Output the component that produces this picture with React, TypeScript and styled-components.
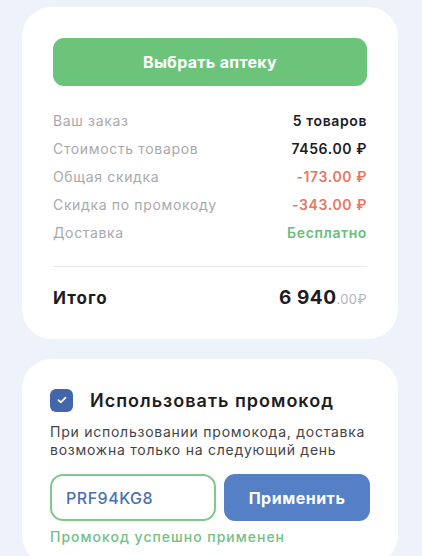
import { FC } from "react";
import styled, { createGlobalStyle } from "styled-components";

const GlobalStyle = createGlobalStyle`
  html, body {
    margin: 0;
    padding: 0;
    background: #eef2fb;
  }
  body {
    font-family: Inter, "Noto Sans", "Liberation Sans", sans-serif;
    -webkit-font-smoothing: antialiased;
  }
`;

const StyledPage = styled.div`
  display: flex;
  flex-direction: column;
  gap: 20px;
  padding: 7px 24px 0 22px;
  height: 556px;
  box-sizing: border-box;
  overflow: hidden;
`;

const StyledCard = styled.div<{ pad: string }>`
  background: #ffffff;
  border-radius: 30px;
  padding: ${(props) => props.pad};
  display: flex;
  flex-direction: column;
`;

const StyledMainButton = styled.button`
  height: 48px;
  border: none;
  border-radius: 11px;
  background: #6cc47b;
  color: #ffffff;
  font-family: inherit;
  font-size: 16px;
  font-weight: 700;
  letter-spacing: 0.3px;
  cursor: pointer;
`;

const StyledRows = styled.div`
  margin-top: 20px;
  display: flex;
  flex-direction: column;
`;

const StyledRow = styled.div`
  display: flex;
  justify-content: space-between;
  align-items: center;
  height: 28px;
  font-size: 14px;
  letter-spacing: 0.65px;
`;

const StyledLabel = styled.span`
  color: #a9a9ab;
`;

const StyledValue = styled.span<{ tone: "dark" | "red" | "green" }>`
  font-weight: 600;
  letter-spacing: 0.6px;
  color: ${(props) =>
    props.tone === "red" ? "#e8775f" : props.tone === "green" ? "#6cbd7e" : "#1d1d1f"};
`;

const StyledDivider = styled.div`
  margin-top: 20px;
  height: 1px;
  background: #e7e8ec;
`;

const StyledTotalRow = styled.div`
  display: flex;
  justify-content: space-between;
  align-items: baseline;
  padding: 19px 0 30px;
  color: #1d1d1f;
`;

const StyledTotalLabel = styled.span`
  font-size: 17px;
  font-weight: 700;
  letter-spacing: 1px;
`;

const StyledTotalValue = styled.span`
  font-size: 19px;
  font-weight: 700;
  letter-spacing: 0.5px;
`;

const StyledCents = styled.span`
  font-size: 13px;
  font-weight: 400;
  color: #b3b3b6;
  letter-spacing: 0.4px;
`;

const StyledCheckRow = styled.label`
  display: flex;
  align-items: center;
  gap: 17px;
  height: 24px;
`;

const StyledCheckbox = styled.span`
  width: 23px;
  height: 23px;
  border-radius: 6px;
  background: #4266a9;
  display: flex;
  align-items: center;
  justify-content: center;
  flex-shrink: 0;
`;

const StyledCheckTitle = styled.span`
  font-size: 18px;
  font-weight: 600;
  color: #1d1d1f;
  letter-spacing: 1px;
`;

const StyledHint = styled.p`
  margin: 11px 0 0;
  font-size: 14px;
  line-height: 18px;
  color: #444448;
  letter-spacing: 0.75px;
`;

const StyledPromoRow = styled.div`
  display: flex;
  gap: 8px;
  margin-top: 15px;
`;

const StyledInput = styled.input`
  width: 166px;
  height: 47px;
  box-sizing: border-box;
  border: 2px solid #7fc98c;
  border-radius: 13px;
  padding: 0 14px;
  font-family: inherit;
  font-size: 16px;
  font-weight: 500;
  color: #4a6fb3;
  letter-spacing: 0.5px;
  outline: none;
`;

const StyledApplyButton = styled.button`
  width: 146px;
  height: 47px;
  border: none;
  border-radius: 11px;
  background: #5580c6;
  color: #ffffff;
  font-family: inherit;
  font-size: 16px;
  font-weight: 700;
  letter-spacing: 0.5px;
`;

const StyledSuccess = styled.div`
  margin-top: 7px;
  font-size: 14px;
  font-weight: 500;
  color: #74c085;
  letter-spacing: 1px;
`;

const rows: { label: string; value: string; tone: "dark" | "red" | "green" }[] = [
  { label: "Ваш заказ", value: "5 товаров", tone: "dark" },
  { label: "Стоимость товаров", value: "7456.00 ₽", tone: "dark" },
  { label: "Общая скидка", value: "-173.00 ₽", tone: "red" },
  { label: "Скидка по промокоду", value: "-343.00 ₽", tone: "red" },
  { label: "Доставка", value: "Бесплатно", tone: "green" },
];

const App: FC = () => {
  return (
    <>
      <GlobalStyle />
      <StyledPage>
        <StyledCard pad="31px 31px 0">
          <StyledMainButton>Выбрать аптеку</StyledMainButton>
          <StyledRows>
            {rows.map((row) => (
              <StyledRow key={row.label}>
                <StyledLabel>{row.label}</StyledLabel>
                <StyledValue tone={row.tone}>{row.value}</StyledValue>
              </StyledRow>
            ))}
          </StyledRows>
          <StyledDivider />
          <StyledTotalRow>
            <StyledTotalLabel>Итого</StyledTotalLabel>
            <StyledTotalValue>
              6 940<StyledCents>.00₽</StyledCents>
            </StyledTotalValue>
          </StyledTotalRow>
        </StyledCard>

        <StyledCard pad="29px 28px 20px">
          <StyledCheckRow>
            <StyledCheckbox>
              <svg width="10" height="8" viewBox="0 0 10 8" fill="none">
                <path
                  d="M1.5 4.2L3.8 6.3L8.5 1.7"
                  stroke="#ffffff"
                  strokeWidth="1.8"
                  strokeLinecap="round"
                  strokeLinejoin="round"
                />
              </svg>
            </StyledCheckbox>
            <StyledCheckTitle>Использовать промокод</StyledCheckTitle>
          </StyledCheckRow>
          <StyledHint>
            При использовании промокода, доставка
            <br />
            возможна только на следующий день
          </StyledHint>
          <StyledPromoRow>
            <StyledInput defaultValue="PRF94KG8" />
            <StyledApplyButton>Применить</StyledApplyButton>
          </StyledPromoRow>
          <StyledSuccess>Промокод успешно применен</StyledSuccess>
        </StyledCard>
      </StyledPage>
    </>
  );
};

export default App;
